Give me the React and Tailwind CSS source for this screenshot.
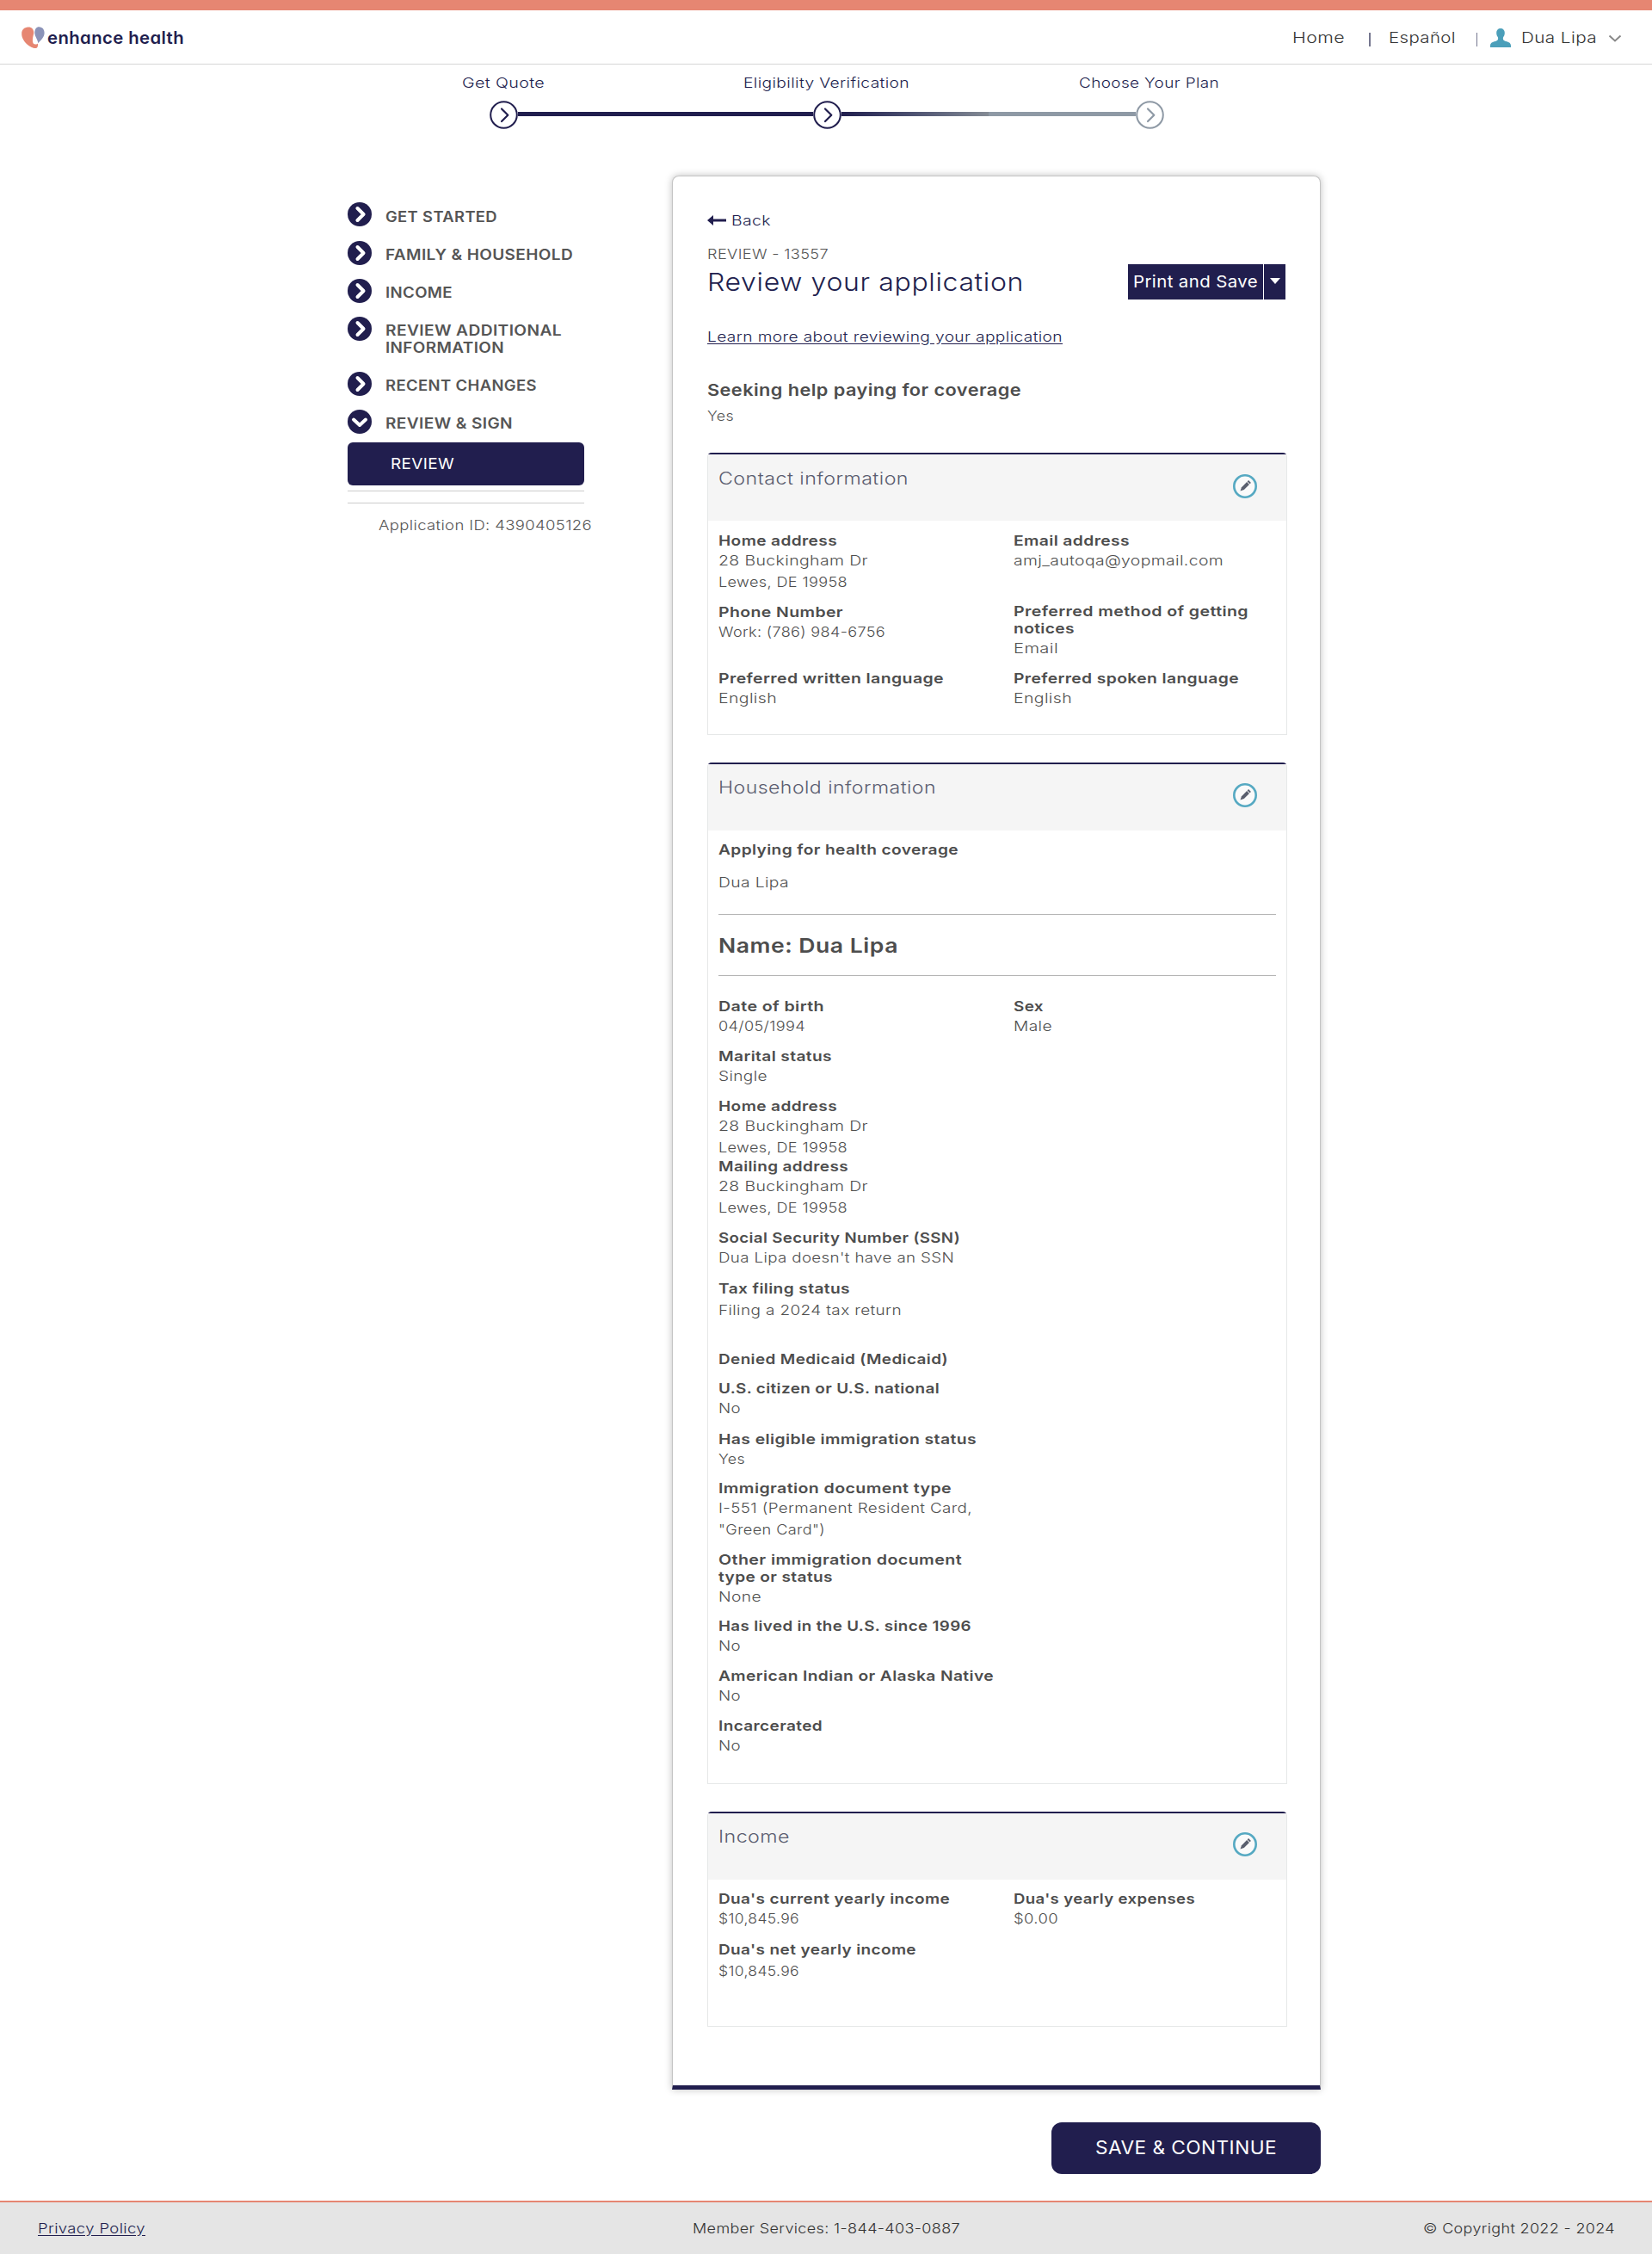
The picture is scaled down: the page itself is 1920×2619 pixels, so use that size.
import React, { useLayoutEffect, useRef } from "react";

/* Single line of text, widened or narrowed so that it spans `w` pixels. */
function T({ w, className = "", inner = "", children }) {
  const ref = useRef(null);
  useLayoutEffect(() => {
    const el = ref.current;
    el.style.transform = "none";
    const natural = el.getBoundingClientRect().width;
    el.style.transform = `scaleX(${(w + 2) / natural})`;
  }, [w, children]);
  return (
    <span className={"inline-block text-left whitespace-nowrap " + className} style={{ width: w }}>
      <span ref={ref} className={"inline-block origin-left tracking-[0.02em] " + inner}>
        {children}
      </span>
    </span>
  );
}

function Logo() {
  return (
    <svg width="27" height="26" viewBox="0 0 27 26" className="-mt-px">
      <path
        d="M7.5 0.6C11.5 0.2 14.3 3 14.3 7.2C14 9.500 12.900 12 12.900 16C12.900 19 14 20.600 16.300 20.600C17.600 20.500 18.400 20 19 19.400C19.300 22.500 18.600 25 16 25C11 25 0.200 17.500 0.200 8.200C0.200 3.600 3.200 0.900 7.500 0.600Z"
        fill="#e68672"
      />
      <path
        d="M20.400 0.300C24.500 0.500 26.600 3.400 26.600 7.300C26.600 12.500 22.500 15.500 19.300 19.300C18.900 14.500 15.300 11.500 15.300 7C15.300 2.800 17.500 0.200 20.400 0.300Z"
        fill="#8b93b8"
      />
    </svg>
  );
}

function Header() {
  return (
    <header className="flex h-[75px] items-center border-t-[12px] border-b border-t-[#e68672] border-b-[#d6d6d6] pt-[2px] pl-[25px]">
      <Logo />
      <T
        w={157}
        className="ml-[3px] text-[20px] font-semibold text-[#211e4e] [font-feature-settings:'cv11']"
      >
        enhance health
      </T>
      <nav className="mr-[35px] ml-auto flex items-center text-[17px] font-light text-[#333]">
        <T w={59} className="mt-px">
          Home
        </T>
        <span className="mt-[3px] ml-[30px] h-4 w-[1.5px] bg-[#75778f]" />
        <T w={76} className="mt-px ml-[21px]">
          Español
        </T>
        <span className="mt-[3px] ml-[26px] h-4 w-[1.5px] bg-[#75778f]" />
        <svg width="24" height="22" viewBox="0 0 24 22" className="ml-[15px]">
          <path
            d="M12 0C15 0 16.800 2 16.800 5C16.800 7.500 16 9 15 10.500C14.600 12.500 15 13.800 16.800 14.500C20 15.800 24 16 24 20V22H0V20C0 16 4 15.800 7.200 14.500C9 13.800 9.400 12.500 9 10.500C8 9 7.200 7.500 7.200 5C7.200 2 9 0 12 0Z"
            fill="#4b9fba"
          />
        </svg>
        <T w={86} className="mt-px ml-[12px]">
          Dua Lipa
        </T>
        <svg width="16" height="10" viewBox="0 0 16 10" className="mt-0.5 ml-[15px]">
          <path d="M1.500 1.500L8 7.500L14.500 1.500" fill="none" stroke="#888" strokeWidth="2" />
        </svg>
      </nav>
    </header>
  );
}

function StepDot({ color }) {
  return (
    <svg width="33" height="33" viewBox="0 0 33 33" className="shrink-0">
      <circle cx="16.500" cy="16.500" r="15.300" fill="#fff" stroke={color} strokeWidth="2" />
      <path
        d="M14 9.500L21.300 16.700L14 24"
        fill="none"
        stroke={color}
        strokeWidth="2.200"
        strokeLinecap="round"
        strokeLinejoin="round"
      />
    </svg>
  );
}

function Stepper() {
  return (
    <section>
      <div className="ml-[396.5px] grid h-10 w-[1125px] grid-cols-3 pt-px text-center text-[16.5px] leading-[40px] font-light text-[#211e4e]">
        <div>
          <T w={94}>Get Quote</T>
        </div>
        <div>
          <T w={191}>Eligibility Verification</T>
        </div>
        <div>
          <T w={161}>Choose Your Plan</T>
        </div>
      </div>
      <div className="mt-[2px] ml-[569px] flex w-[784px] items-center">
        <StepDot color="#211e4e" />
        <div className="mb-0.5 h-[5px] flex-1 bg-[#211e4e]" />
        <StepDot color="#211e4e" />
        <div className="mb-0.5 flex h-[5px] flex-1">
          <div className="flex-1 bg-linear-to-r from-[#211e4e] to-[#848b94]" />
          <div className="flex-1 bg-[#8e99a5]" />
        </div>
        <StepDot color="#8e99a5" />
      </div>
    </section>
  );
}

function NavDot({ open }) {
  return (
    <svg width="28" height="28" viewBox="0 0 28 28" className="shrink-0">
      <circle cx="14" cy="14" r="14" fill="#211e4e" />
      <path
        d={open ? "M7 11.500L14 18L21 11.500" : "M11.500 7L18.500 14L11.500 21"}
        fill="none"
        stroke="#fff"
        strokeWidth="4"
        strokeLinecap="round"
        strokeLinejoin="round"
      />
    </svg>
  );
}

const NAV = [
  { lines: [["GET STARTED", 128]], gap: "", text: "pt-[7px]" },
  { lines: [["FAMILY & HOUSEHOLD", 216]], gap: "mt-[17px]", text: "pt-[6px]" },
  { lines: [["INCOME", 76]], gap: "mt-[16px]", text: "pt-[6px]" },
  {
    lines: [
      ["REVIEW ADDITIONAL", 203],
      ["INFORMATION", 136],
    ],
    gap: "mt-[16px]",
    text: "pt-[6px]",
  },
  { lines: [["RECENT CHANGES", 174]], gap: "mt-[18px]", text: "pt-[6px]" },
  { lines: [["REVIEW & SIGN", 146]], gap: "mt-[16px]", text: "pt-[6px]", open: true },
];

function Sidebar() {
  return (
    <aside className="w-[275px] shrink-0 pt-[31px]">
      <ul>
        {NAV.map((item) => (
          <li key={item.lines[0][0]} className={"flex items-start gap-[15.5px] " + item.gap}>
            <NavDot open={item.open} />
            <div className={"-mb-3 flex flex-col text-[17px] font-semibold text-[#555] " + item.text}>
              {item.lines.map(([t, w]) => (
                <div key={t} className="h-5 leading-5">
                  <T w={w}>{t}</T>
                </div>
              ))}
              <div className="h-3" />
            </div>
          </li>
        ))}
      </ul>
      <div className="mt-[10px] h-[50px] rounded-[6px] bg-[#211e4e] pl-[50px] text-[17px] leading-[50px] text-white">
        <T w={72}>REVIEW</T>
      </div>
      <hr className="mt-[6px] border-[#ccc]" />
      <hr className="mt-[13px] border-[#ccc]" />
      <div className="mt-[13px] pl-[36px] text-[16.5px] leading-[25px] font-light text-[#555]">
        <T w={246}>Application ID: 4390405126</T>
      </div>
    </aside>
  );
}

/* Label above one or more value lines; every entry is [text, width]. */
function Field({ label = [], value = [], gap = "", vgap = "" }) {
  return (
    <div className={gap}>
      {label.map(([t, w]) => (
        <div key={t} className="h-5 text-[16.5px] leading-5 font-semibold text-[#4d4d4d]">
          <T w={w}>{t}</T>
        </div>
      ))}
      <div className={vgap}>
        {value.map(([t, w]) => (
          <div key={t} className="h-[25px] text-[16.5px] leading-[26px] font-light text-[#4f4f4f]">
            <T w={w}>{t}</T>
          </div>
        ))}
      </div>
    </div>
  );
}

function EditIcon() {
  return (
    <svg width="28" height="28" viewBox="0 0 28 28" className="mt-[8px] mr-[34px]">
      <circle cx="14" cy="14" r="12.700" fill="#fff" fillOpacity="0.500" stroke="#56a9c2" strokeWidth="2.600" />
      <g transform="rotate(45 14 14)" fill="#5a5f6e">
        <path d="M12 6.200H16V8.200H12Z" />
        <path d="M12 9H16V17.600L14 21.800L12 17.600Z" />
      </g>
    </svg>
  );
}

function Panel({ title, className, head = "pt-[14px]", children }) {
  return (
    <section className={"rounded-t-[5px] border border-t-2 border-[#e6e8e8] border-t-[#211e4e] " + className}>
      <div className={"flex h-[77px] items-start justify-between bg-[#f5f5f5] " + head}>
        <div className="pl-[12px] text-[20px] leading-[26px] font-light text-[#5b5d70]">
          <T w={title[1]}>{title[0]}</T>
        </div>
        <EditIcon />
      </div>
      <div className="px-[12px]">{children}</div>
    </section>
  );
}

const LEWES = [
  ["28 Buckingham Dr", 172],
  ["Lewes, DE 19958", 148],
];

function ReviewCard() {
  return (
    <main className="flex h-[2224px] w-[754px] flex-col rounded-t-[8px] border border-b-[5px] border-[#c4c4c4] border-b-[#211e4e] bg-white pr-[38px] pl-[40px] shadow-[0_0_8px_rgba(0,0,0,0.25)]">
      <div className="mt-[39px] flex h-6 items-center text-[16.5px] font-light text-[#211e4e]">
        <svg width="22" height="12" viewBox="0 0 22 12">
          <path d="M0 6L7 0V4.500H22V7.500H7V12Z" fill="#211e4e" />
        </svg>
        <T w={44} className="ml-[6px]">
          Back
        </T>
      </div>
      <div className="mt-[15px] h-6 text-[16.5px] leading-6 font-light text-[#555]">
        <T w={139}>REVIEW - 13557</T>
      </div>
      <div className="flex h-[41px] items-center">
        <h1 className="flex-1 text-[29px] leading-[41px] font-light text-[#211e4e]">
          <T w={366}>Review your application</T>
        </h1>
        <div className="mr-[2px] flex gap-px">
          <div className="h-[41px] w-[157px] bg-[#211e4e] pl-[6px] text-[19px] leading-[41px] text-white">
            <T w={143}>Print and Save</T>
          </div>
          <div className="flex h-[41px] w-[25px] items-center justify-center bg-[#211e4e]">
            <svg width="12" height="7" viewBox="0 0 12 7" className="-mt-0.5">
              <path d="M0 0H12L6 7Z" fill="#fff" />
            </svg>
          </div>
        </div>
      </div>
      <div className="mt-[31px] h-6 text-[16.5px] leading-6 font-light text-[#211e4e]">
        <T w={411} inner="underline underline-offset-2">
          Learn more about reviewing your application
        </T>
      </div>
      <div className="mt-[39px] h-6 text-[19px] leading-6 font-semibold text-[#4d4d4d]">
        <T w={363}>Seeking help paying for coverage</T>
      </div>
      <div className="mt-[5px] h-6 text-[16.5px] leading-6 font-light text-[#555]">
        <T w={29}>Yes</T>
      </div>

      <Panel title={["Contact information", 219]} head="pt-[15px]" className="mt-[31px] h-[328px]">
        <div className="grid grid-cols-[343px_1fr]">
          <div>
            <Field gap="mt-[13px]" label={[["Home address", 136]]} value={LEWES} />
            <Field gap="mt-[13px]" label={[["Phone Number", 143]]} value={[["Work: (786) 984-6756", 192]]} />
            <Field gap="mt-[32px]" label={[["Preferred written language", 260]]} value={[["English", 66]]} />
          </div>
          <div>
            <Field gap="mt-[13px]" label={[["Email address", 133]]} value={[["amj_autoqa@yopmail.com", 242]]} />
            <Field
              gap="mt-[37px]"
              label={[
                ["Preferred method of getting", 271],
                ["notices", 69],
              ]}
              value={[["Email", 50]]}
            />
            <Field gap="mt-[13px]" label={[["Preferred spoken language", 260]]} value={[["English", 66]]} />
          </div>
        </div>
      </Panel>

      <Panel title={["Household information", 251]} className="mt-[32px] h-[1187px]">
        <Field
          gap="mt-[12px]"
          vgap="mt-[15px]"
          label={[["Applying for health coverage", 277]]}
          value={[["Dua Lipa", 80]]}
        />
        <hr className="mt-[25px] border-[#b5b5b5]" />
        <h2 className="mt-[20px] h-8 text-[23.5px] leading-8 font-semibold text-[#4d4d4d]">
          <T w={207}>Name: Dua Lipa</T>
        </h2>
        <hr className="mt-[18px] border-[#b5b5b5]" />
        <div className="mt-[25px] grid grid-cols-[343px_1fr]">
          <Field label={[["Date of birth", 121]]} value={[["04/05/1994", 99]]} />
          <Field label={[["Sex", 33]]} value={[["Male", 43]]} />
        </div>
        <Field gap="mt-[13px]" label={[["Marital status", 130]]} value={[["Single", 55]]} />
        <Field gap="mt-[13px]" label={[["Home address", 136]]} value={LEWES} />
        <Field gap="" label={[["Mailing address", 149]]} value={LEWES} />
        <Field
          gap="mt-[13px]"
          label={[["Social Security Number (SSN)", 279]]}
          value={[["Dua Lipa doesn't have an SSN", 272]]}
        />
        <Field
          gap="mt-[14px]"
          vgap="mt-[2px]"
          label={[["Tax filing status", 151]]}
          value={[["Filing a 2024 tax return", 211]]}
        />
        <Field gap="mt-[35px]" label={[["Denied Medicaid (Medicaid)", 265]]} />
        <Field gap="mt-[14px]" label={[["U.S. citizen or U.S. national", 255]]} value={[["No", 24]]} />
        <Field gap="mt-[14px]" label={[["Has eligible immigration status", 298]]} value={[["Yes", 29]]} />
        <Field
          gap="mt-[12px]"
          label={[["Immigration document type", 269]]}
          value={[
            ["I-551 (Permanent Resident Card,", 293],
            ['"Green Card")', 122],
          ]}
        />
        <Field
          gap="mt-[13px]"
          label={[
            ["Other immigration document", 281],
            ["type or status", 131],
          ]}
          value={[["None", 48]]}
        />
        <Field gap="mt-[12px]" label={[["Has lived in the U.S. since 1996", 292]]} value={[["No", 24]]} />
        <Field gap="mt-[13px]" label={[["American Indian or Alaska Native", 318]]} value={[["No", 24]]} />
        <Field gap="mt-[13px]" label={[["Incarcerated", 119]]} value={[["No", 24]]} />
      </Panel>

      <Panel title={["Income", 81]} className="mt-[32px] h-[250px]">
        <div className="mt-[12px] grid grid-cols-[343px_1fr]">
          <Field label={[["Dua's current yearly income", 267]]} value={[["$10,845.96", 92]]} />
          <Field label={[["Dua's yearly expenses", 209]]} value={[["$0.00", 50]]} />
        </div>
        <Field
          gap="mt-[14px]"
          vgap="mt-[2px]"
          label={[["Dua's net yearly income", 228]]}
          value={[["$10,845.96", 92]]}
        />
      </Panel>
    </main>
  );
}

export default function App() {
  return (
    <div className="flex min-h-[2619px] flex-col bg-white font-['Inter','Open_Sans',sans-serif]">
      <Header />
      <Stepper />
      <div className="mt-[54px] ml-[404px] flex items-start gap-[102px]">
        <Sidebar />
        <div className="flex flex-col items-end">
          <ReviewCard />
          <button className="mt-[38px] h-[60px] w-[313px] rounded-[12px] bg-[#211e4e] pr-[2px] text-center text-[21px] text-white">
            <T w={209}>SAVE & CONTINUE</T>
          </button>
        </div>
      </div>
      <footer className="mt-auto grid h-[62px] grid-cols-3 items-center border-t-2 border-[#e68672] bg-[#e5e5e5] pr-[45px] pl-[44px] text-[16.5px] font-light text-[#333]">
        <div>
          <T w={123} className="text-[#211e4e]" inner="underline underline-offset-2">
            Privacy Policy
          </T>
        </div>
        <div className="text-center">
          <T w={309}>Member Services: 1-844-403-0887</T>
        </div>
        <div className="text-right">
          <T w={221}>© Copyright 2022 - 2024</T>
        </div>
      </footer>
    </div>
  );
}
